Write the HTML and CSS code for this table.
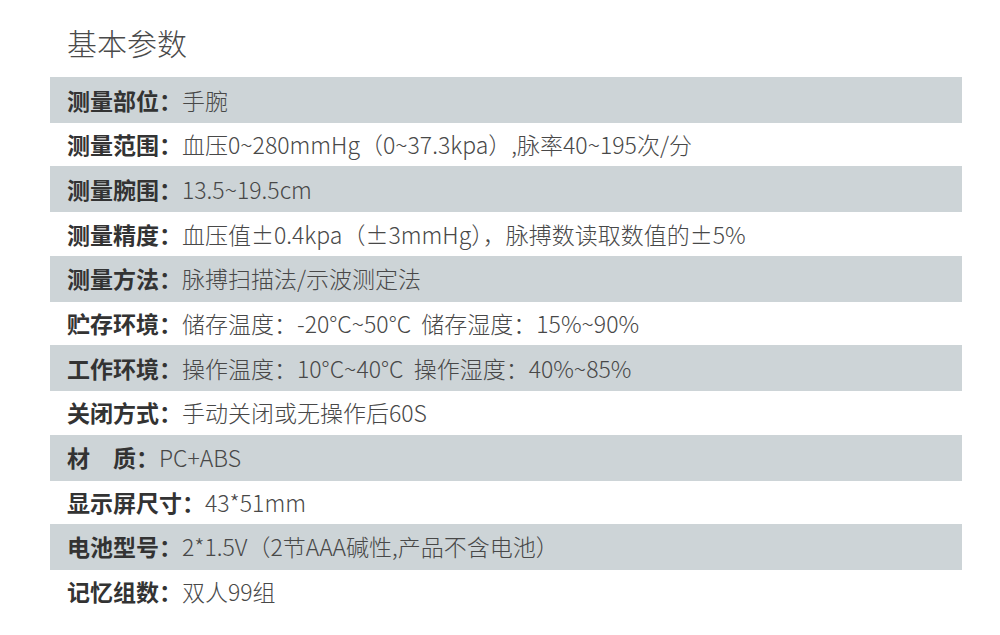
FILE: index.html
```html
<!DOCTYPE html>
<html lang="zh-CN">
<head>
<meta charset="utf-8">
<title>基本参数</title>
<link rel="stylesheet" href="styles.css">
</head>
<body>
<div class="page">
  <h1 class="title">基本参数</h1>
  <div class="specs">
    <div class="row"><span class="label">测量部位：</span><span class="value">手腕</span></div>
    <div class="row"><span class="label">测量范围：</span><span class="value">血压0~280mmHg（0~37.3kpa）,脉率40~195次/分</span></div>
    <div class="row"><span class="label">测量腕围：</span><span class="value">13.5~19.5cm</span></div>
    <div class="row"><span class="label">测量精度：</span><span class="value">血压值±0.4kpa（±3mmHg），脉搏数读取数值的±5%</span></div>
    <div class="row"><span class="label">测量方法：</span><span class="value">脉搏扫描法/示波测定法</span></div>
    <div class="row"><span class="label">贮存环境：</span><span class="value">储存温度：-20°C~50°C&nbsp; 储存湿度：15%~90%</span></div>
    <div class="row"><span class="label">工作环境：</span><span class="value">操作温度：10°C~40°C&nbsp; 操作湿度：40%~85%</span></div>
    <div class="row"><span class="label">关闭方式：</span><span class="value">手动关闭或无操作后60S</span></div>
    <div class="row"><span class="label">材　质：</span><span class="value">PC+ABS</span></div>
    <div class="row"><span class="label">显示屏尺寸：</span><span class="value">43*51mm</span></div>
    <div class="row"><span class="label">电池型号：</span><span class="value">2*1.5V（2节AAA碱性,产品不含电池）</span></div>
    <div class="row"><span class="label">记忆组数：</span><span class="value">双人99组</span></div>
  </div>
</div>
</body>
</html>
```
FILE: styles.css
```css
html, body {
  margin: 0;
  padding: 0;
  background: #ffffff;
}
body {
  font-family: "Noto Sans CJK SC", "Noto Sans", sans-serif;
  color: #3a3a3a;
}
.page {
  width: 912px;
  padding-left: 50px;
}
.title {
  margin: 0;
  height: 77px;
  display: flex;
  align-items: center;
  padding-left: 17px;
  padding-top: 6px;
  box-sizing: border-box;
  font-size: 30px;
  font-weight: 300;
  color: #4a4a4a;
  line-height: 1;
}
.specs {
  display: flex;
  flex-direction: column;
}
.row {
  display: flex;
  align-items: center;
  height: 43.4px;
  padding-left: 17px;
  font-size: 23px;
  line-height: 1;
  white-space: nowrap;
}
.row:nth-child(odd) {
  height: 46px;
  background: #cdd4d7;
}
.label {
  font-weight: 700;
  color: #333333;
}
.value {
  font-weight: 300;
  color: #484848;
}
```
